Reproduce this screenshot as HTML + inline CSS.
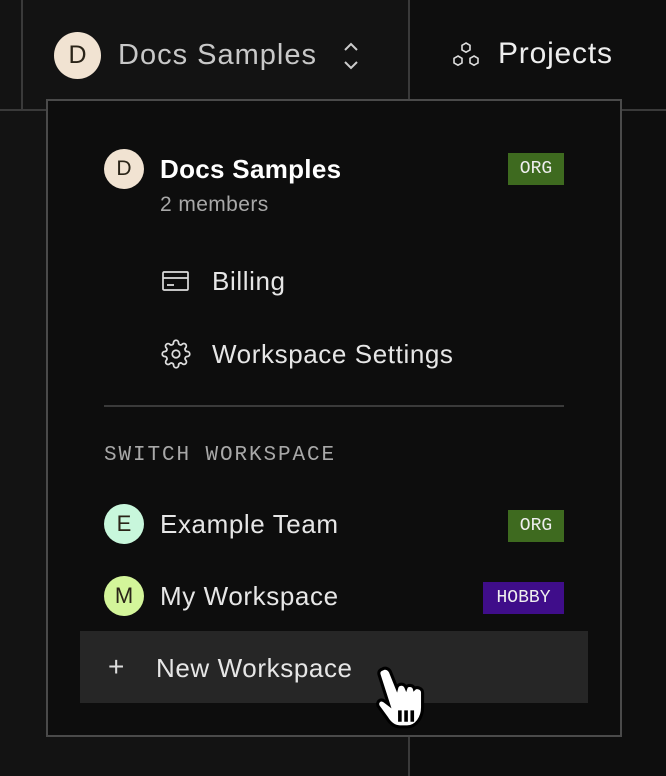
<!DOCTYPE html>
<html><head><style>
*{margin:0;padding:0;box-sizing:border-box}
body{width:666px;height:776px;overflow:hidden;background:#0e0e0e;font-family:"Liberation Sans",sans-serif;position:relative}
.a{position:absolute}
.av{position:absolute;border-radius:50%;display:flex;align-items:center;justify-content:center;color:#2a2418;font-size:21px}
.t{position:absolute;color:#e6e6e6;font-size:26px;letter-spacing:.6px;line-height:30px;white-space:nowrap}
.badge{position:absolute;font-family:"Liberation Mono",monospace;font-size:18px;color:#eee;display:flex;align-items:center;justify-content:center;height:32px}
</style></head><body>
<div class="a" style="left:0;top:0;width:409px;height:776px;background:#131313"></div>
<div class="a" style="left:21px;top:0;width:2px;height:110px;background:#3a3a3a"></div>
<div class="a" style="left:408px;top:0;width:2px;height:776px;background:#3a3a3a"></div>
<div class="a" style="left:0;top:109px;width:666px;height:2px;background:#3a3a3a"></div>

<div class="av" style="left:54px;top:32px;width:47px;height:47px;background:#f1e3d2;font-size:25px">D</div>
<div class="t" style="left:118px;top:40px;font-size:29px;letter-spacing:1px;color:#c8c8c8">Docs Samples</div>
<svg class="a" style="left:341px;top:41px" width="20" height="30" viewBox="0 0 20 30"><path d="M4 9l6-6 6 6M4 21l6 6 6-6" fill="none" stroke="#ccc" stroke-width="2"/></svg>
<svg class="a" style="left:451px;top:40px" width="32" height="32" viewBox="0 0 32 32" fill="none" stroke="#ddd" stroke-width="1.6"><path d="M15 3l4 2.3v4.6l-4 2.3-4-2.3V5.3z"/><path d="M8 15l4 2.3v4.6L8 24.2l-4-2.3v-4.6z" transform="translate(-1,1)"/><path d="M22 15l4 2.3v4.6l-4 2.3-4-2.3v-4.6z" transform="translate(1,1)"/></svg>
<div class="t" style="left:498px;top:39px;font-size:30px;letter-spacing:.8px;color:#eee">Projects</div>

<div class="a" style="left:46px;top:99px;width:576px;height:638px;background:#0d0d0d;border:2px solid #4a4a4a"></div>

<div class="av" style="left:104px;top:149px;width:40px;height:40px;background:#f1e3d2">D</div>
<div class="t" style="left:160px;top:154px;font-weight:bold;color:#fff;font-size:26px;letter-spacing:.3px">Docs Samples</div>
<div class="t" style="left:160px;top:190px;font-size:21px;letter-spacing:.4px;color:#a8a8a8">2 members</div>
<div class="badge" style="left:508px;top:153px;width:56px;background:#3e6a1f">ORG</div>

<svg class="a" style="left:162px;top:270px" width="28" height="22" viewBox="0 0 28 22" fill="none" stroke="#ddd" stroke-width="1.7"><rect x="1" y="2" width="25" height="18" rx="1"/><path d="M1 8h25M5 15h7"/></svg>
<div class="t" style="left:212px;top:266px">Billing</div>
<svg class="a" style="left:161px;top:339px" width="30" height="30" viewBox="0 0 24 24" fill="none" stroke="#ddd" stroke-width="1.4"><circle cx="12" cy="12" r="3"/><path d="M19.4 15a1.65 1.65 0 00.33 1.82l.06.06a2 2 0 11-2.83 2.830l-.06-.06a1.65 1.65 0 00-1.82-.33 1.65 1.65 0 00-1 1.51V21a2 2 0 11-4 0v-.09A1.65 1.65 0 009 19.4a1.65 1.65 0 00-1.82.33l-.06.06a2 2 0 11-2.83-2.83l.06-.06A1.65 1.65 0 004.6 15a1.65 1.65 0 00-1.51-1H3a2 2 0 110-4h.09A1.65 1.65 0 004.6 9a1.65 1.65 0 00-.33-1.82l-.06-.06a2 2 0 112.83-2.830l.06.06A1.65 1.65 0 009 4.6a1.65 1.65 0 001-1.51V3a2 2 0 114 0v.09a1.65 1.65 0 001 1.51 1.65 1.65 0 001.82-.33l.06-.06a2 2 0 112.83 2.83l-.06.06A1.65 1.65 0 0019.4 9a1.65 1.65 0 001.51 1H21a2 2 0 110 4h-.09a1.65 1.65 0 00-1.51 1z"/></svg>
<div class="t" style="left:212px;top:339px">Workspace Settings</div>

<div class="a" style="left:104px;top:405px;width:460px;height:2px;background:#3a3a3a"></div>
<div class="t" style="left:104px;top:441px;font-family:'Liberation Mono',monospace;font-size:21px;color:#a8a8a8;letter-spacing:1.9px">SWITCH WORKSPACE</div>

<div class="av" style="left:104px;top:504px;width:40px;height:40px;background:#c8f7dc;font-size:22px">E</div>
<div class="t" style="left:160px;top:509px">Example Team</div>
<div class="badge" style="left:508px;top:510px;width:56px;background:#3e6a1f">ORG</div>

<div class="av" style="left:104px;top:576px;width:40px;height:40px;background:#d3f59a;font-size:22px">M</div>
<div class="t" style="left:160px;top:581px">My Workspace</div>
<div class="badge" style="left:483px;top:582px;width:81px;background:#3f0d8a">HOBBY</div>

<div class="a" style="left:80px;top:631px;width:508px;height:72px;background:#262626"></div>
<div class="t" style="left:108px;top:652px;font-size:28px;color:#ddd">+</div>
<div class="t" style="left:156px;top:653px">New Workspace</div>
<svg class="a" style="left:372px;top:664px" width="64" height="70" viewBox="0 0 62 66"><path d="M10 4c3-2 7 0 8 3l6 15c1-4 7-5 9 0 1-3 7-3 8 1 2-2 8-1 8 4v14c0 10-6 19-15 19h-7c-6 0-10-4-13-9L6 40c-2-4 2-8 6-5l4 3L7 10c-1-3 0-5 3-6z" fill="#fff" stroke="#000" stroke-width="3"/><path d="M27 44v11M33 44v11M39 44v11" stroke="#000" stroke-width="3.5"/></svg>
</body></html>
